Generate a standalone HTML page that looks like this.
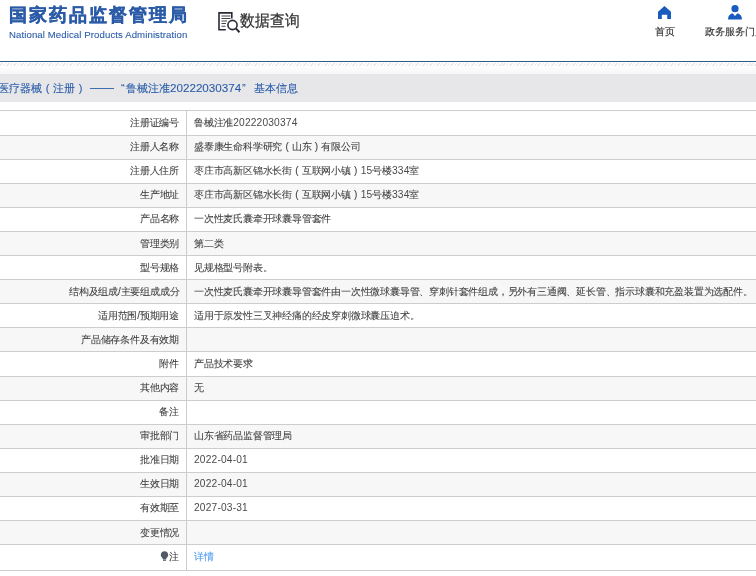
<!DOCTYPE html>
<html><head><meta charset="utf-8">
<style>
html,body{margin:0;padding:0;width:756px;height:576px;overflow:hidden;background:#fff;font-family:"Liberation Sans",sans-serif;}
.abs{position:absolute;}
.lab,.val,.bt,.nav,#sjcx,#logo-cn,#logo-en{will-change:transform;}
#logo-cn{position:absolute;left:8.5px;top:2px;font-size:18px;font-weight:bold;color:#2b5ba7;letter-spacing:2px;-webkit-text-stroke:0.35px #2b5ba7;white-space:nowrap;line-height:26px;}
#logo-en{position:absolute;left:9px;top:29px;font-size:9.6px;letter-spacing:0.1px;-webkit-text-stroke:0.1px #2a5ca9;color:#2a5ca9;white-space:nowrap;line-height:12px;}
#sjcx{position:absolute;left:240px;top:8.6px;font-size:15px;color:#333;-webkit-text-stroke:0.25px #333;white-space:nowrap;line-height:22px;transform:scaleY(1.08);transform-origin:0 4px;}
#searchicon{position:absolute;left:216px;top:10px;}
.nav{position:absolute;top:25px;font-size:10px;color:#333;-webkit-text-stroke:0.15px #333;white-space:nowrap;line-height:14px;}
#topline{position:absolute;left:0;top:61px;width:756px;height:1px;background:#2f5a86;}
#hatch{position:absolute;left:0;top:62.5px;width:756px;height:3.8px;
 background:repeating-linear-gradient(135deg,#fff 0px,#fff 1.4px,#e8e8e8 1.4px,#e8e8e8 2.47px);}
#fade{position:absolute;left:0;top:66.3px;width:756px;height:7.7px;background:linear-gradient(#fff,#f6f6f6);}
#bar{position:absolute;left:0;top:74px;width:756px;height:28px;background:#e7e7e9;}
.bt{position:absolute;top:80px;font-size:11px;color:#2a5ca9;-webkit-text-stroke:0.1px #2a5ca9;white-space:nowrap;line-height:16px;}
.row{position:absolute;left:0;width:756px;border-top:1px solid #cdcdcd;box-sizing:border-box;}
.hl{position:absolute;left:0;width:756px;height:1px;background:#cdcdcd;}
.lab{position:absolute;right:577px;height:14px;line-height:14px;text-align:right;font-size:10px;letter-spacing:-0.2px;color:#3f3f3f;white-space:nowrap;-webkit-text-stroke:0.08px #3f3f3f;}
.val{position:absolute;left:194px;height:14px;line-height:14px;font-size:10px;letter-spacing:-0.2px;color:#3f3f3f;white-space:nowrap;-webkit-text-stroke:0.08px #3f3f3f;}
.vl{position:absolute;left:186px;top:110px;width:1px;height:460px;background:#cccccc;}
.lnk{color:#4a9bef;-webkit-text-stroke:0.1px #4a9bef;}
.pr{display:inline-block;width:9.8px;text-align:center;letter-spacing:0;}
.pr2{display:inline-block;width:11px;text-align:center;}
.num{font-size:10.2px;letter-spacing:0.18px;color:#4a4a4a;-webkit-text-stroke:0;}
.pin{margin-right:1px;vertical-align:-1px;position:relative;left:1px;}
</style></head><body>
<div id="logo-cn">国家药品监督管理局</div>
<div id="logo-en">National Medical Products Administration</div>
<svg id="searchicon" width="26" height="26" viewBox="0 0 26 26">
 <path d="M15.8 8.5V2.9H3V19.7h6.8" fill="none" stroke="#2b2b38" stroke-width="1.6"/>
 <path d="M5.5 6h9M5.5 8.5h9M5.5 11h5.5M5.5 13.5h4.5M5.5 16.2h4" stroke="#444" stroke-width="1.1"/>
 <circle cx="16.5" cy="15" r="4.6" fill="#fff" stroke="#2b2b38" stroke-width="1.6"/>
 <path d="M19.8 18.4L23.5 22.2" stroke="#2b2b38" stroke-width="2"/>
</svg>
<div id="sjcx">数据查询</div>
<svg class="abs" style="left:657px;top:6px" width="15" height="14" viewBox="0 0 15 14"><path d="M7.5 0L14 5.8V13H10.2V8.7H4.8V13H1V5.8Z" fill="#1a5bbf"/></svg>
<div class="nav" style="left:655px">首页</div>
<svg class="abs" style="left:727px;top:4px" width="16" height="16" viewBox="0 0 16 16"><circle cx="8" cy="4.7" r="3.6" fill="#1a5bbf"/><path d="M1 15.5C1 12 3 10 5.5 9.3L8 12L10.5 9.3C13 10 15 12 15 15.5Z" fill="#1a5bbf"/></svg>
<div class="nav" style="left:705px">政务服务门户</div>
<div id="topline"></div>
<div id="hatch"></div>
<div id="fade"></div>
<div id="bar"></div>
<div class="bt" style="left:-2px">医疗器械<span class="pr2">(</span>注册<span class="pr2">)</span></div>
<div class="bt" style="left:90px;font-size:12px;top:79.5px">——</div>
<div class="bt" style="left:120.5px">“</div>
<div class="bt" style="left:125.5px">鲁械注准<span style="font-size:11.65px">20222030374</span></div>
<div class="bt" style="left:242px">”</div>
<div class="bt" style="left:253.5px">基本信息</div>
<div class="row" style="top:110px;height:25px;background:#fff"></div>
<div class="lab" style="top:116.10px">注册证编号</div><div class="val" style="top:116.10px">鲁械注准<span class="num">20222030374</span></div>
<div class="row" style="top:135px;height:24px;background:#f7f7f7"></div>
<div class="lab" style="top:140.19px">注册人名称</div><div class="val" style="top:140.19px">盛泰康生命科学研究<span class="pr">(</span>山东<span class="pr">)</span>有限公司</div>
<div class="row" style="top:159px;height:24px;background:#fff"></div>
<div class="lab" style="top:164.27px">注册人住所</div><div class="val" style="top:164.27px">枣庄市高新区锦水长街<span class="pr">(</span>互联网小镇<span class="pr">)</span><span class="num">15</span>号楼<span class="num">334</span>室</div>
<div class="row" style="top:183px;height:24px;background:#f7f7f7"></div>
<div class="lab" style="top:188.36px">生产地址</div><div class="val" style="top:188.36px">枣庄市高新区锦水长街<span class="pr">(</span>互联网小镇<span class="pr">)</span><span class="num">15</span>号楼<span class="num">334</span>室</div>
<div class="row" style="top:207px;height:24px;background:#fff"></div>
<div class="lab" style="top:212.44px">产品名称</div><div class="val" style="top:212.44px">一次性麦氏囊牵开球囊导管套件</div>
<div class="row" style="top:231px;height:24px;background:#f7f7f7"></div>
<div class="lab" style="top:236.53px">管理类别</div><div class="val" style="top:236.53px">第二类</div>
<div class="row" style="top:255px;height:24px;background:#fff"></div>
<div class="lab" style="top:260.61px">型号规格</div><div class="val" style="top:260.61px">见规格型号附表。</div>
<div class="row" style="top:279px;height:24px;background:#f7f7f7"></div>
<div class="lab" style="top:284.69px">结构及组成/主要组成成分</div><div class="val" style="top:284.69px">一次性麦氏囊牵开球囊导管套件由一次性微球囊导管、穿刺针套件组成，另外有三通阀、延长管、指示球囊和充盈装置为选配件。</div>
<div class="row" style="top:303px;height:24px;background:#fff"></div>
<div class="lab" style="top:308.78px">适用范围/预期用途</div><div class="val" style="top:308.78px">适用于原发性三叉神经痛的经皮穿刺微球囊压迫术。</div>
<div class="row" style="top:327px;height:24px;background:#f7f7f7"></div>
<div class="lab" style="top:332.87px">产品储存条件及有效期</div><div class="val" style="top:332.87px"></div>
<div class="row" style="top:351px;height:25px;background:#fff"></div>
<div class="lab" style="top:356.95px">附件</div><div class="val" style="top:356.95px">产品技术要求</div>
<div class="row" style="top:376px;height:24px;background:#f7f7f7"></div>
<div class="lab" style="top:381.04px">其他内容</div><div class="val" style="top:381.04px">无</div>
<div class="row" style="top:400px;height:24px;background:#fff"></div>
<div class="lab" style="top:405.12px">备注</div><div class="val" style="top:405.12px"></div>
<div class="row" style="top:424px;height:24px;background:#f7f7f7"></div>
<div class="lab" style="top:429.21px">审批部门</div><div class="val" style="top:429.21px">山东省药品监督管理局</div>
<div class="row" style="top:448px;height:24px;background:#fff"></div>
<div class="lab" style="top:453.29px">批准日期</div><div class="val" style="top:453.29px"><span class="num">2022-04-01</span></div>
<div class="row" style="top:472px;height:24px;background:#f7f7f7"></div>
<div class="lab" style="top:477.38px">生效日期</div><div class="val" style="top:477.38px"><span class="num">2022-04-01</span></div>
<div class="row" style="top:496px;height:24px;background:#fff"></div>
<div class="lab" style="top:501.46px">有效期至</div><div class="val" style="top:501.46px"><span class="num">2027-03-31</span></div>
<div class="row" style="top:520px;height:24px;background:#f7f7f7"></div>
<div class="lab" style="top:525.54px">变更情况</div><div class="val" style="top:525.54px"></div>
<div class="row" style="top:544px;height:26px;background:#fff"></div>
<div class="lab" style="top:549.63px"><svg class="pin" width="9" height="10" viewBox="0 0 9 10"><path d="M4.5 0.3C2.3 0.3 0.8 1.9 0.8 3.9c0 1.5 0.9 2.4 1.7 3.2l0.4 1.3h3.2l0.4-1.3c0.8-0.8 1.7-1.7 1.7-3.2C8.2 1.9 6.7 0.3 4.5 0.3z" fill="#525a68"/><rect x="3" y="8.8" width="3" height="1" fill="#525a68"/></svg>注</div><div class="val" style="top:549.63px"><span class="lnk">详情</span></div>
<div class="hl" style="top:570px"></div>
<div class="vl"></div>
</body></html>
